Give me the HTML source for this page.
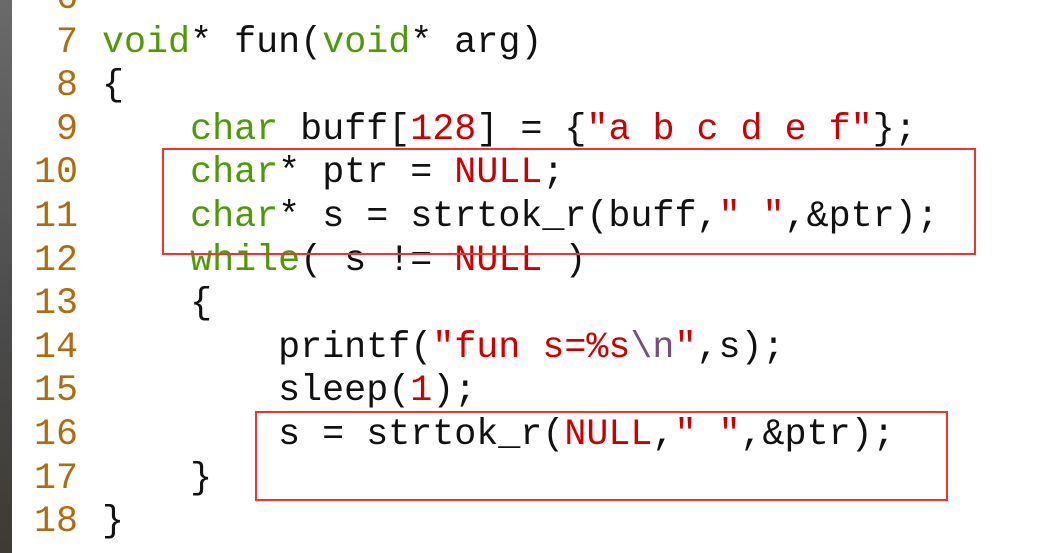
<!DOCTYPE html>
<html><head><meta charset="utf-8"><style>
html,body{margin:0;padding:0;background:#fff;width:1056px;height:553px;overflow:hidden;position:relative}
.strip{position:absolute;left:0;top:0;width:12px;height:553px;background:linear-gradient(#6a6a6a,#4a4a4a 60%,#3e3a34)}
.l{position:absolute;left:0;width:1056px;height:43.6px;line-height:43.6px;font-family:"Liberation Mono",monospace;font-size:36.7px;white-space:pre;color:#111}
.n{position:absolute;left:0;width:78px;color:#b06c0c;text-align:right}
.c{position:absolute;left:102px}
.g{color:#4e9a06}.r{color:#cc0000}.p{color:#75507b}
.box{position:absolute;border:2px solid #ee3333}
</style></head><body>
<div class="strip"></div>
<div class="l" style="top:-22px"><span class="n">6</span></div>
<div class="l" style="top:21.5px"><span class="n">7</span><span class="c"><span class="g">void</span>* fun(<span class="g">void</span>* arg)</span></div>
<div class="l" style="top:65.1px"><span class="n">8</span><span class="c">{</span></div>
<div class="l" style="top:108.7px"><span class="n">9</span><span class="c">    <span class="g">char</span> buff[<span class="r">128</span>] = {<span class="r">"a b c d e f"</span>};</span></div>
<div class="l" style="top:152.3px"><span class="n">10</span><span class="c">    <span class="g">char</span>* ptr = <span class="r">NULL</span>;</span></div>
<div class="l" style="top:195.9px"><span class="n">11</span><span class="c">    <span class="g">char</span>* s = strtok_r(buff,<span class="r">" "</span>,&amp;ptr);</span></div>
<div class="l" style="top:239.5px"><span class="n">12</span><span class="c">    <span class="g">while</span>( s != <span class="r">NULL</span> )</span></div>
<div class="l" style="top:283.1px"><span class="n">13</span><span class="c">    {</span></div>
<div class="l" style="top:326.7px"><span class="n">14</span><span class="c">        printf(<span class="r">"fun s=%s<span class="p">\n</span>"</span>,s);</span></div>
<div class="l" style="top:370.3px"><span class="n">15</span><span class="c">        sleep(<span class="r">1</span>);</span></div>
<div class="l" style="top:413.9px"><span class="n">16</span><span class="c">        s = strtok_r(<span class="r">NULL</span>,<span class="r">" "</span>,&amp;ptr);</span></div>
<div class="l" style="top:457.5px"><span class="n">17</span><span class="c">    }</span></div>
<div class="l" style="top:501.1px"><span class="n">18</span><span class="c">}</span></div>
<div class="box" style="left:162px;top:148px;width:810px;height:103px"></div>
<div class="box" style="left:255px;top:411px;width:689px;height:86px"></div>
</body></html>
